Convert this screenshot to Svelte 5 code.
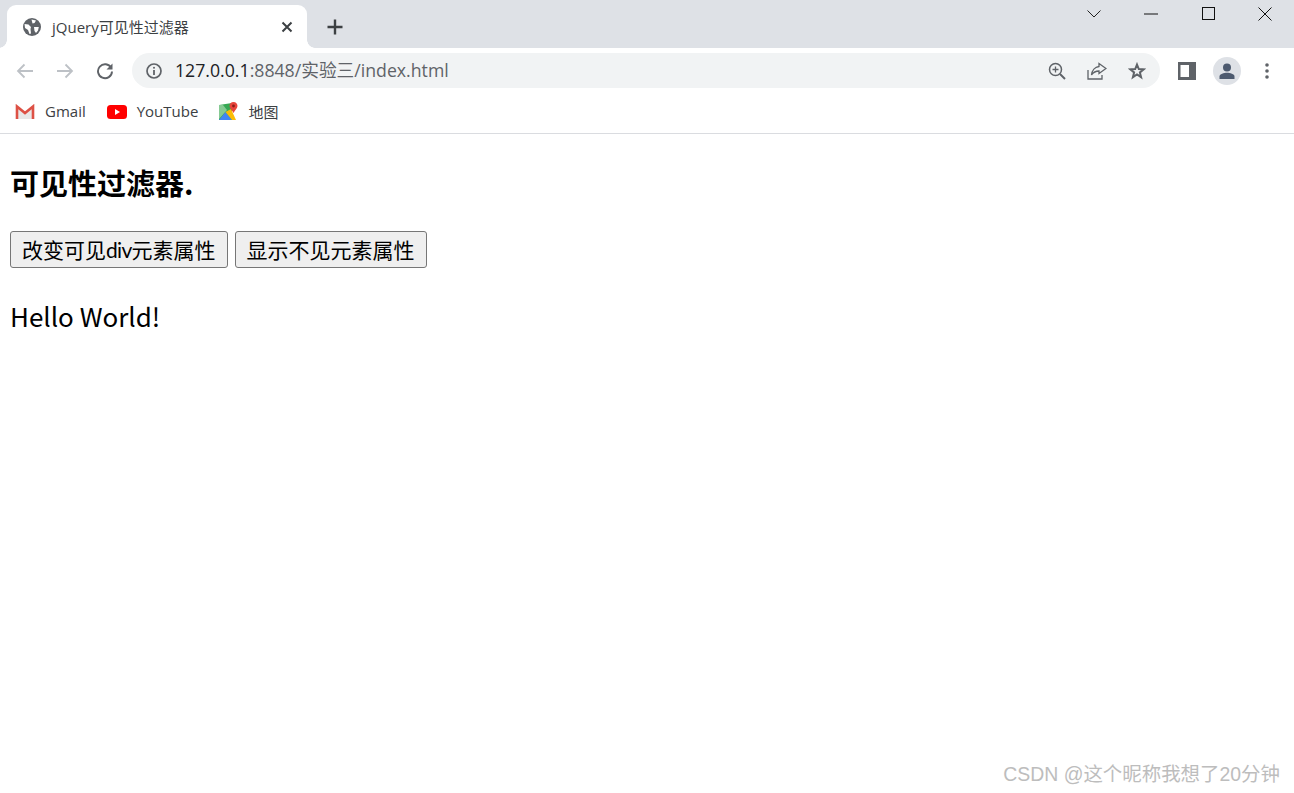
<script>
	const bookmarks = ['Gmail', 'YouTube', '地图'];
</script>

<div class="window">
	<div class="tabstrip">
		<div class="tab">
			<svg class="favicon" width="18" height="18" viewBox="0 0 18 18">
				<circle cx="9" cy="9" r="9" fill="#5f6368" />
				<path d="M1.500 6 L5.500 6.500 L8 9 L7.500 11 L8 15.500 L6.500 16 L5 12 L2 10 Z M8.500 1.500 L13 2.500 L11.500 5 L9.500 5.500 Z M11 9 L15.800 9 L15 12.500 L13 15 L11.500 13 Z" fill="#fff" />
			</svg>
			<span class="tab-title">jQuery可见性过滤器</span>
			<svg class="tab-close" width="12" height="12" viewBox="0 0 12 12">
				<path d="M1.500 1.500 L10.500 10.500 M10.500 1.500 L1.500 10.500" stroke="#3c4043" stroke-width="2" />
			</svg>
		</div>
		<svg class="newtab" width="16" height="16" viewBox="0 0 16 16">
			<path d="M8 .5 V15.500 M.5 8 H15.500" stroke="#3c4043" stroke-width="2.400" />
		</svg>
		<div class="wincontrols">
			<svg width="14" height="8" viewBox="0 0 14 8"><path d="M.5 .5 L7 7 L13.500 .5" fill="none" stroke="#222" /></svg>
			<svg width="14" height="2" viewBox="0 0 14 2"><path d="M0 1 H14" stroke="#111" /></svg>
			<svg width="13" height="13" viewBox="0 0 13 13"><rect x=".5" y=".5" width="12" height="12" fill="none" stroke="#111" /></svg>
			<svg width="14" height="14" viewBox="0 0 14 14"><path d="M.5 .5 L13.500 13.500 M13.500 .5 L.5 13.500" stroke="#111" /></svg>
		</div>
	</div>

	<div class="toolbar">
		<div class="nav">
			<svg width="18" height="16" viewBox="0 0 18 16"><path d="M17 8 H2 M8.500 1.500 L2 8 L8.500 14.500" fill="none" stroke="#bdc1c6" stroke-width="1.800" /></svg>
			<svg width="18" height="16" viewBox="0 0 18 16"><path d="M1 8 H16 M9.500 1.500 L16 8 L9.500 14.500" fill="none" stroke="#bdc1c6" stroke-width="1.800" /></svg>
			<svg width="18" height="18" viewBox="0 0 18 18"><path d="M15.200 6 A7 7 0 1 0 16 9.500" fill="none" stroke="#5f6368" stroke-width="1.900" /><path d="M16.500 1.500 V7.500 H10.500 Z" fill="#5f6368" /></svg>
		</div>
		<div class="omnibox">
			<svg width="16" height="16" viewBox="0 0 16 16">
				<circle cx="8" cy="8" r="7" fill="none" stroke="#5f6368" stroke-width="1.700" />
				<path d="M8 7 V12" stroke="#5f6368" stroke-width="1.800" />
				<circle cx="8" cy="4.800" r="1" fill="#5f6368" />
			</svg>
			<span class="url"><span class="host">127.0.0.1</span>:8848/实验三/index.html</span>
			<div class="omni-actions">
				<svg width="18" height="18" viewBox="0 0 18 18">
					<circle cx="7.500" cy="7.500" r="6" fill="none" stroke="#5f6368" stroke-width="1.500" />
					<path d="M12 12 L17 17" stroke="#5f6368" stroke-width="2" />
					<path d="M7.500 4.500 V10.500 M4.500 7.500 H10.500" stroke="#5f6368" stroke-width="1.300" />
				</svg>
				<svg width="20" height="18" viewBox="0 0 20 18">
					<path d="M1 8 V17 H15 V13" fill="none" stroke="#5f6368" stroke-width="1.300" />
					<path d="M12 1.500 L19 6.500 L12 11.500 V9 C9 9 6.500 10 4.500 13 C5 8.500 8 5 12 4.500 Z" fill="none" stroke="#5f6368" stroke-width="1.300" />
				</svg>
				<svg width="18" height="18" viewBox="0 0 18 18">
					<path d="M9 2.500 L10.800 7 L15.700 7.300 L11.900 10.400 L13.100 15.200 L9 12.500 L4.900 15.200 L6.100 10.400 L2.300 7.300 L7.200 7 Z" fill="none" stroke="#5f6368" stroke-width="2" />
				</svg>
			</div>
		</div>
		<div class="tools">
			<svg width="18" height="18" viewBox="0 0 18 18">
				<path fill-rule="evenodd" d="M0 0 H18 V18 H0 Z M2.500 3 V15 H11 V3 Z" fill="#5f6368" />
			</svg>
			<div class="avatar">
				<svg width="18" height="18" viewBox="0 0 18 18">
					<circle cx="9" cy="5.500" r="4" fill="#4d5a6f" />
					<path d="M1.500 17 V14.500 C1.500 12 6 10.800 9 10.800 C12 10.800 16.500 12 16.500 14.500 V17 Z" fill="#4d5a6f" />
				</svg>
			</div>
			<svg width="4" height="16" viewBox="0 0 4 16">
				<circle cx="2" cy="2" r="1.800" fill="#5f6368" />
				<circle cx="2" cy="8" r="1.800" fill="#5f6368" />
				<circle cx="2" cy="14" r="1.800" fill="#5f6368" />
			</svg>
		</div>
	</div>

	<div class="bookmarks">
		{#each bookmarks as name}
			<div class="bookmark">
				{#if name === 'Gmail'}
					<svg width="20" height="16" viewBox="0 0 20 16">
						<path d="M1 3 L10 10 L19 3 V15 H1 Z" fill="#e8e8e8" />
						<path d="M2 15 V2.500 L10 9 L18 2.500 V15" fill="none" stroke="#dd5145" stroke-width="2.600" />
					</svg>
				{:else if name === 'YouTube'}
					<svg width="20" height="14" viewBox="0 0 20 14">
						<rect width="20" height="14" rx="3.500" fill="#f00" />
						<path d="M8 4 L13 7 L8 10 Z" fill="#fff" />
					</svg>
				{:else}
					<svg width="19" height="20" viewBox="0 0 19 20">
						<path d="M0 3 L13 1 V18 L0 18 Z" fill="#35a853" />
						<path d="M0 18 L6.500 10 L13 18 Z" fill="#4285f4" />
						<path d="M6.500 10 L13 18 H17 L12 7 Z" fill="#fbbc05" />
						<path d="M0 3 L4 3 L8 8 L0 17 Z" fill="#c9e6c9" opacity=".55" />
						<path d="M14.500 0 C17 0 18.500 2 18.500 4 C18.500 6.500 15.500 8.500 14.500 11 C13.500 8.500 10.500 6.500 10.500 4 C10.500 2 12 0 14.500 0 Z" fill="#e8453c" />
						<circle cx="14.500" cy="4" r="1.400" fill="#8c1d18" />
					</svg>
				{/if}
				<span>{name}</span>
			</div>
		{/each}
	</div>

	<main class="page">
		<h3>可见性过滤器.</h3>
		<div class="buttons">
			<button>改变可见<span class="latin">div</span>元素属性</button>
			<button>显示不见元素属性</button>
		</div>
		<p>Hello World!</p>
	</main>

	<div class="watermark">CSDN @这个昵称我想了20分钟</div>
</div>

<style>
	:global(body) {
		background: #fff;
	}
	.window {
		position: relative;
		height: 793px;
		overflow: hidden;
		font-family: "Open Sans", "Noto Sans CJK SC", sans-serif;
		background: #fff;
	}
	.tabstrip {
		display: flex;
		align-items: flex-end;
		height: 48px;
		padding-left: 7px;
		background: #dee1e6;
	}
	.tab {
		position: relative;
		display: flex;
		align-items: center;
		width: 300px;
		height: 43px;
		padding: 0 14px 0 16px;
		box-sizing: border-box;
		background: #fff;
		border-radius: 9px 9px 0 0;
	}
	/* flared corners at the foot of the tab */
	.tab::before,
	.tab::after {
		content: '';
		position: absolute;
		bottom: 0;
		width: 8px;
		height: 8px;
		background: radial-gradient(circle at var(--cx) 0, #dee1e6 7.500px, #fff 8px);
	}
	.tab::before {
		--cx: 0;
		left: -8px;
	}
	.tab::after {
		--cx: 100%;
		right: -8px;
	}
	.tab-title {
		flex: 1;
		margin-left: 11px;
		font-size: 15px;
		color: #3c4043;
	}
	.newtab {
		margin: 0 0 13px 20px;
	}
	.wincontrols {
		margin-left: auto;
		display: flex;
		align-items: center;
		gap: 43.330px;
		align-self: flex-start;
		height: 27px;
		padding-right: 22px;
	}
	.toolbar {
		display: flex;
		align-items: center;
		height: 45px;
	}
	.nav {
		display: flex;
		flex: none;
		align-items: center;
		gap: 22px;
		padding-left: 16px;
		width: 132px;
		box-sizing: border-box;
	}
	.omnibox {
		display: flex;
		flex: none;
		align-items: center;
		width: 1028px;
		height: 35px;
		padding: 0 14px;
		box-sizing: border-box;
		background: #f1f3f4;
		border-radius: 18px;
	}
	.url {
		margin: -3px 0 0 13px;
		flex: 1;
		font-size: 17.700px;
		color: #5f6368;
	}
	.host {
		color: #202124;
	}
	.omni-actions {
		display: flex;
		align-items: center;
		gap: 21px;
	}
	.tools {
		display: flex;
		flex: none;
		align-items: center;
		padding-left: 18px;
	}
	.avatar {
		display: flex;
		align-items: center;
		justify-content: center;
		width: 28px;
		height: 28px;
		margin: 0 24px 0 17px;
		background: #dee1e6;
		border-radius: 50%;
	}
	.bookmarks {
		display: flex;
		align-items: center;
		gap: 21px;
		height: 33px;
		padding: 2px 0 5px 15px;
		border-bottom: 1px solid #dadce0;
	}
	.bookmark {
		display: flex;
		align-items: center;
		gap: 10px;
		font-size: 15px;
		color: #3c4043;
	}
	.bookmark span {
		margin-top: -1px;
	}
	.page {
		padding-left: 10px;
		color: #000;
		font-family: "Noto Sans CJK SC", sans-serif;
	}
	h3 {
		margin: 27px 0 0;
		height: 42px;
		font-size: 29px;
		line-height: 42px;
		font-weight: 700;
	}
	.buttons {
		display: flex;
		gap: 7px;
		margin-top: 28px;
	}
	button {
		height: 37px;
		padding: 0 11px;
		font-family: Lato, "Noto Sans CJK SC", sans-serif;
		font-size: 21px;
		line-height: 1;
		color: #000;
		background: #efefef;
		border: 1px solid #767676;
		border-radius: 3px;
	}
	.latin {
		letter-spacing: -.7px;
	}
	p {
		margin: 29px 0 0;
		font-size: 26px;
		line-height: 38px;
	}
	.watermark {
		position: absolute;
		right: 14px;
		bottom: 6px;
		font-size: 19.450px;
		color: #bdbdbd;
		font-family: "Liberation Sans", "Noto Sans CJK SC", sans-serif;
	}
</style>
